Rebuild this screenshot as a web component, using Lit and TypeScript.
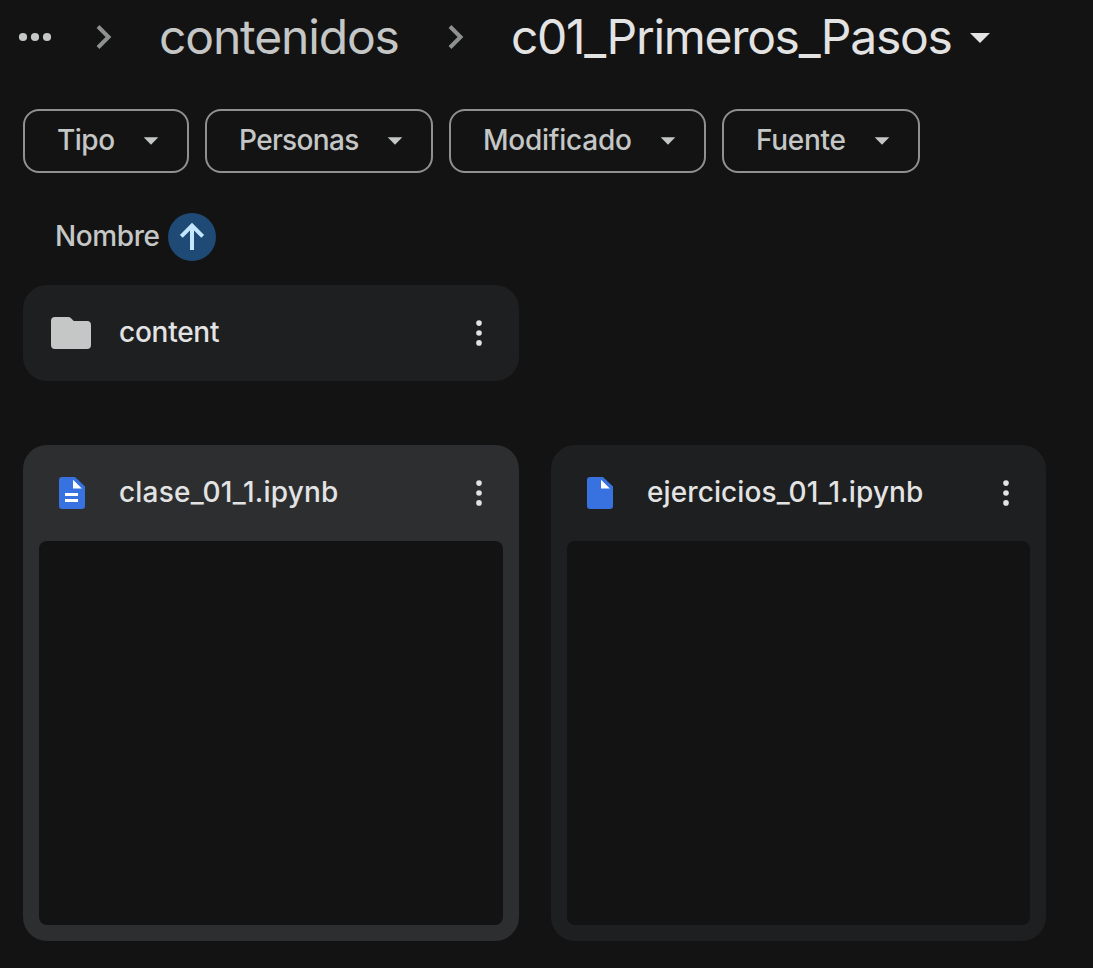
import { LitElement, html, css, svg, nothing } from "lit";
import { customElement, property } from "lit/decorators.js";

@customElement("more-button")
class MoreButton extends LitElement {
  static styles = css`
    :host { display: block; width: 48px; height: 48px; color: #e3e3e3; }
    svg { display: block; }
  `;
  render() {
    return html`<svg width="48" height="48" viewBox="0 0 48 48" fill="currentColor">
      <circle cx="24" cy="14.1" r="2.8" /><circle cx="24" cy="24" r="2.8" /><circle cx="24" cy="33.9" r="2.8" />
    </svg>`;
  }
}

@customElement("filter-chip")
class FilterChip extends LitElement {
  @property() label = "";
  static styles = css`
    :host {
      display: flex; align-items: center; justify-content: space-between;
      box-sizing: border-box; height: 64px; padding: 0 28px 0 32px;
      border: 2px solid #8e918f; border-radius: 16px;
      color: #c4c7c5; font-size: 28px; font-weight: 500; line-height: 40px;
    }
    span { white-space: nowrap; padding-bottom: 2px; }
    svg { display: block; flex: none; }
  `;
  render() {
    return html`<span>${this.label}</span>
      <svg width="16" height="8" viewBox="0 0 16 8" fill="currentColor"><path d="M.7.3h14.6L8 7.8z" /></svg>`;
  }
}

@customElement("file-card")
class FileCard extends LitElement {
  @property() name = "";
  @property() kind = "file";
  static styles = css`
    :host {
      display: flex; flex-direction: column; box-sizing: border-box;
      border-radius: 24px; background: #1e1f20; color: #e3e3e3;
    }
    :host([active]) { background: #2d2e30; }
    .head { display: flex; align-items: center; height: 96px; padding: 0 16px 0 24px; }
    .icon { display: block; flex: none; width: 48px; height: 48px; }
    .name {
      flex: 1; margin-left: 24px; padding-bottom: 2px; white-space: nowrap;
      font-size: 28px; font-weight: 500; line-height: 40px;
    }
    .preview { flex: 1; margin: 0 16px 16px; border-radius: 8px; background: #131314; }
  `;
  private icon() {
    if (this.kind === "folder") {
      return svg`<path fill="#c4c7c5" d="M8 8h13.2a4 4 0 0 1 2.8 1.2L26.8 12H40a4 4 0 0 1 4 4v20a4 4 0 0 1-4 4H8a4 4 0 0 1-4-4V12a4 4 0 0 1 4-4z" />`;
    }
    return svg`
      <path fill="#3871e0" d="M15 8h13l10 9.5V37a3 3 0 0 1-3 3H15a3 3 0 0 1-3-3V11a3 3 0 0 1 3-3z" />
      <path fill="#fff" d="M26 10.8v8.7h8.9z" />
      ${this.kind === "doc" ? svg`<path fill="#fff" d="M18 24h13v3H18zM18 30h13v3H18z" />` : nothing}`;
  }
  render() {
    return html`
      <div class="head">
        <svg class="icon" viewBox="0 0 48 48">${this.icon()}</svg>
        <span class="name">${this.name}</span>
        <more-button></more-button>
      </div>
      ${this.kind === "folder" ? nothing : html`<div class="preview"></div>`}
    `;
  }
}

@customElement("app-root")
class AppRoot extends LitElement {
  static styles = css`
    :host {
      display: block; box-sizing: border-box; width: 1093px; height: 968px; overflow: hidden;
      background: #131314; color: #c4c7c5;
      font-family: Inter, "Open Sans", sans-serif;
    }
    svg { display: block; flex: none; }
    .crumbs { display: flex; align-items: center; height: 74px; padding-left: 18px; }
    .crumb { font-size: 48px; line-height: 64px; white-space: nowrap; }
    .parent { width: 242px; margin-left: 46px; letter-spacing: -1.15px; }
    .current { width: 442px; margin-left: 46px; letter-spacing: -1.3px; color: #e3e3e3; }
    .sep { color: #8e918f; }
    .first { margin-left: 43px; }
    .second { margin-left: 46px; }
    .caret { margin: 2px 0 0 17px; color: #e3e3e3; }
    .filters { display: flex; gap: 16px; margin-top: 35px; padding-left: 23px; }
    .type { width: 166px; letter-spacing: -0.5px; }
    .people { width: 228px; letter-spacing: -0.65px; }
    .modified { width: 257px; letter-spacing: -0.25px; }
    .source { width: 198px; letter-spacing: -0.3px; }
    .sort { display: flex; align-items: center; height: 48px; margin-top: 40px; padding-left: 55px; }
    .sort-label {
      width: 113px; padding-bottom: 2px; letter-spacing: -0.4px;
      font-size: 28px; font-weight: 500; line-height: 40px; white-space: nowrap;
    }
    .grid {
      display: grid; grid-template-columns: 496px 495px; grid-template-rows: 96px 496px;
      column-gap: 32px; row-gap: 64px; margin-top: 24px; padding-left: 23px;
    }
    .folder { grid-column: 1; letter-spacing: -0.25px; }
    .notebook { grid-row: 2; letter-spacing: 0.2px; }
    .exercises { letter-spacing: 0.1px; }
  `;
  render() {
    return html`
      <nav class="crumbs">
        <svg width="34" height="10" viewBox="0 0 34 10" fill="currentColor">
          <circle cx="5" cy="5" r="4.1" /><circle cx="17" cy="5" r="4.1" /><circle cx="29" cy="5" r="4.1" />
        </svg>
        <svg class="sep first" width="18" height="26" viewBox="0 0 18 26" fill="none" stroke="currentColor" stroke-width="4"><path d="m3 2.5 10.5 10.5L3 23.5" /></svg>
        <span class="crumb parent">contenidos</span>
        <svg class="sep second" width="18" height="26" viewBox="0 0 18 26" fill="none" stroke="currentColor" stroke-width="4"><path d="m3 2.5 10.5 10.5L3 23.5" /></svg>
        <span class="crumb current">c01_Primeros_Pasos</span>
        <svg class="caret" width="20" height="10" viewBox="0 0 20 10" fill="currentColor"><path d="M0 0h20L10 10z" /></svg>
      </nav>
      <div class="filters">
        <filter-chip class="type" label="Tipo"></filter-chip>
        <filter-chip class="people" label="Personas"></filter-chip>
        <filter-chip class="modified" label="Modificado"></filter-chip>
        <filter-chip class="source" label="Fuente"></filter-chip>
      </div>
      <div class="sort">
        <span class="sort-label">Nombre</span>
        <svg width="48" height="48" viewBox="0 0 48 48">
          <circle cx="24" cy="24" r="24" fill="#1f4a75" />
          <path d="M24 37V12.5M13.3 23.3 24 12.5l10.7 10.8" fill="none" stroke="#c2e7ff" stroke-width="4" />
        </svg>
      </div>
      <main class="grid">
        <file-card class="folder" kind="folder" name="content"></file-card>
        <file-card class="notebook" kind="doc" name="clase_01_1.ipynb" active></file-card>
        <file-card class="notebook exercises" kind="file" name="ejercicios_01_1.ipynb"></file-card>
      </main>
    `;
  }
}
